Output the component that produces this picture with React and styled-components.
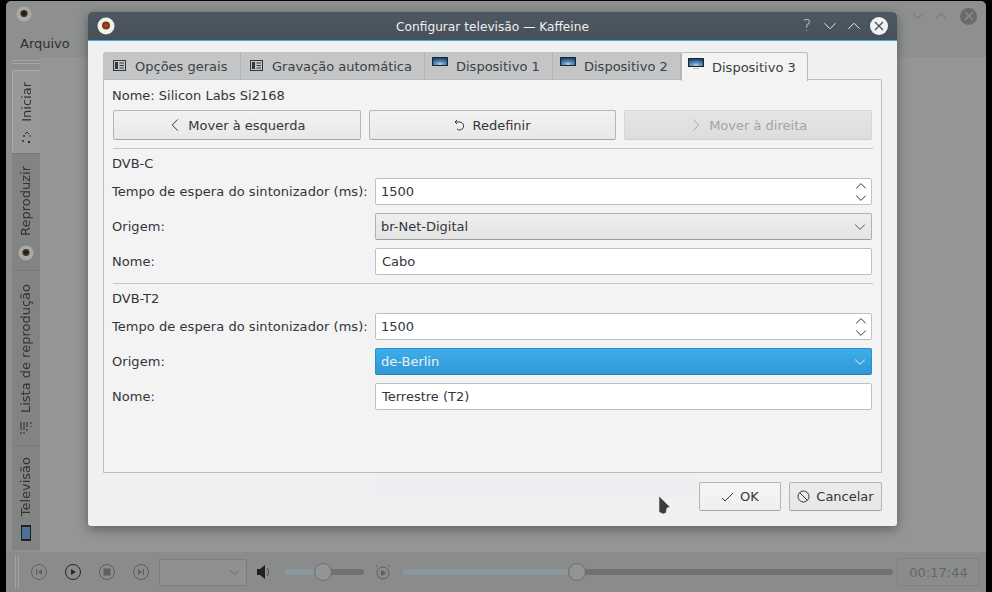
import React from "react";
import styled, { createGlobalStyle } from "styled-components";

const GlobalStyle = createGlobalStyle`
  html, body {
    margin: 0;
    padding: 0;
    width: 992px;
    height: 592px;
    overflow: hidden;
    background: #000;
    font-family: "DejaVu Sans", sans-serif;
    font-size: 13px;
    color: #31363b;
  }
`;

const Screen = styled.div`
  position: relative;
  width: 992px;
  height: 592px;
  background: #000;
  overflow: hidden;
`;

// Kaffeine main window, dimmed behind the dialog
const MainWindow = styled.div`
  margin-left: 6px;
  width: 980px;
  height: 591px;
  margin-top: 1px;
  border-radius: 5px 5px 0 0;
  background: #8e908f;
  display: flex;
  flex-direction: column;
`;

const TitleRow = styled.div`
  height: 30px;
  flex: none;
  padding: 5px 0 0 10px;
  box-sizing: border-box;
  display: flex;
  justify-content: space-between;
`;

const WindowControls = styled.div`
  display: flex;
  align-items: center;
  gap: 11px;
  height: 18px;
  margin: 1px 9px 0 0;
  color: #6e7070;
`;

const CloseDim = styled.div`
  width: 17px;
  height: 17px;
  margin-left: 2px;
  border-radius: 50%;
  background: #696b6b;
  display: flex;
  align-items: center;
  justify-content: center;
`;

const MenuRow = styled.div`
  height: 26px;
  flex: none;
  padding-left: 14px;
  box-sizing: border-box;
  line-height: 25px;
  color: #2e3031;
`;

const Middle = styled.div`
  flex: 1;
  display: flex;
  background: #949695;
`;

const Sidebar = styled.div`
  width: 34px;
  flex: none;
  padding: 3px 0 0 6px;
  box-sizing: border-box;
  background: #8e908f;
`;

const GripH = styled.div`
  height: 2px;
  width: 28px;
  border-top: 1px solid #a5a6a6;
  border-bottom: 1px solid #a5a6a6;
  margin-bottom: 6px;
`;

const SideTab = styled.div`
  height: ${(p) => p.$h}px;
  width: 28px;
  box-sizing: border-box;
  display: flex;
  flex-direction: column;
  align-items: center;
  justify-content: flex-end;
  gap: 9px;
  padding-bottom: 9px;
  background: ${(p) => (p.$active ? "#979998" : "#828483")};
  border-left: ${(p) => (p.$active ? "1px solid #a9aaaa" : "none")};
  border-top: 1px solid ${(p) => (p.$active ? "#a9aaaa" : "#787a79")};
  border-radius: ${(p) => (p.$active ? "3px 0 0 3px" : "0")};
  color: #303233;
`;

const SideLabel = styled.span`
  writing-mode: vertical-rl;
  transform: rotate(180deg);
  line-height: 28px;
  height: auto;
  width: 28px;
  text-align: left;
`;

const PlayerBar = styled.div`
  height: 40px;
  flex: none;
  background: #8a8c8b;
  display: flex;
  align-items: center;
  box-sizing: border-box;
  padding-left: 9px;
`;

const GripV = styled.div`
  width: 2px;
  height: 34px;
  border-left: 1px solid #a2a3a3;
  border-right: 1px solid #a2a3a3;
  margin-right: 12px;
`;

const RoundBtn = styled.div`
  width: 16px;
  height: 16px;
  flex: none;
  box-sizing: border-box;
  border-radius: 50%;
  border: 1px solid ${(p) => (p.$on ? "#26282a" : "#606262")};
  margin-right: 18px;
  display: flex;
  align-items: center;
  justify-content: center;
`;

const DimCombo = styled.div`
  width: 88px;
  height: 27px;
  flex: none;
  box-sizing: border-box;
  margin: 0 0 0 -8px;
  border: 1px solid #7c7e7d;
  border-radius: 2px;
  background: #8f9190;
  display: flex;
  align-items: center;
  justify-content: flex-end;
  padding-right: 6px;
`;

const Slider = styled.div`
  position: relative;
  width: ${(p) => p.$w}px;
  height: 6px;
  flex: none;
  border-radius: 3px;
  background: #707271;
  margin-left: ${(p) => p.$ml}px;
  overflow: visible;
`;

const SliderFill = styled.div`
  height: 6px;
  border-radius: 3px 0 0 3px;
  background: #8a989e;
`;

const SliderThumb = styled.div`
  position: absolute;
  top: -6px;
  width: 18px;
  height: 18px;
  box-sizing: border-box;
  border-radius: 50%;
  border: 1px solid #6c6e6d;
  background: #939594;
`;

const TimeBox = styled.div`
  width: 83px;
  height: 28px;
  flex: none;
  margin-left: 4px;
  box-sizing: border-box;
  border: 1px solid #7f817f;
  border-radius: 2px;
  color: #656766;
  display: flex;
  align-items: center;
  justify-content: center;
`;

// Dialog
const Dialog = styled.div`
  position: absolute;
  left: 88px;
  top: 12px;
  width: 809px;
  height: 514px;
  border-radius: 4px 4px 3px 3px;
  background: #f0f0f1;
  box-shadow: 0 3px 12px rgba(0, 0, 0, 0.38);
  display: flex;
  flex-direction: column;
  overflow: hidden;
`;

const DialogTitle = styled.div`
  position: relative;
  height: 29px;
  flex: none;
  box-sizing: border-box;
  background: linear-gradient(#4e5862, #475059);
  border-bottom: 1px solid #3daee9;
  color: #eff0f1;
  font-size: 12.2px;
  display: flex;
  align-items: center;
  justify-content: center;
  padding-top: 1px;
`;

const DialogLogo = styled.div`
  position: absolute;
  left: 9px;
  top: 5px;
`;

const TitleButtons = styled.div`
  position: absolute;
  right: 9px;
  top: 5px;
  display: flex;
  align-items: center;
  gap: 10px;
`;

const HelpMark = styled.span`
  color: #c6cacd;
  font-size: 16px;
  font-weight: 300;
  width: 16px;
  margin-right: -2px;
  text-align: center;
  line-height: 18px;
`;

const CloseBtn = styled.div`
  width: 18px;
  height: 18px;
  margin-left: -1px;
  border-radius: 50%;
  background: #f2f3f4;
  display: flex;
  align-items: center;
  justify-content: center;
`;

const DialogBody = styled.div`
  flex: 1;
  padding: 11px 15px 15px;
  display: flex;
  flex-direction: column;
`;

const TabBar = styled.div`
  display: flex;
  height: 28px;
  flex: none;
  position: relative;
  z-index: 1;
`;

const Tab = styled.div`
  width: ${(p) => p.$w}px;
  box-sizing: border-box;
  display: flex;
  align-items: center;
  gap: ${(p) => p.$gap}px;
  padding: ${(p) => (p.$active ? 0 : 1)}px 0 0 ${(p) => p.$pl}px;
  color: #3a3f44;
  background: ${(p) => (p.$active ? "#f3f3f3" : "#c3c5c6")};
  border-right: 1px solid #b0b2b3;
  border-radius: ${(p) => (p.$first ? "3px 0 0 0" : "0")};
  height: 28px;
  ${(p) =>
    p.$active
      ? "border: 1px solid #b8baba; border-bottom: none; border-radius: 3px 3px 0 0; margin-top: 0; height: 29px;"
      : "border-bottom: 1px solid #b8baba;"}
`;

const Panel = styled.div`
  width: 779px;
  height: 394px;
  margin-top: -1px;
  box-sizing: border-box;
  background: #f3f3f3;
  border: 1px solid #bcbdbd;
  border-radius: 0 2px 0 0;
  padding: 6px 9px 0 9px;
  display: flex;
  flex-direction: column;
`;

const DeviceName = styled.div`
  height: 20px;
  line-height: 19px;
  margin: 0 0 4px -1px;
`;

const MoveRow = styled.div`
  display: flex;
  gap: 8px;
  height: 30px;
`;

const PushButton = styled.div`
  flex: 1;
  box-sizing: border-box;
  display: flex;
  align-items: center;
  justify-content: center;
  gap: 6px;
  color: ${(p) => (p.$disabled ? "#a3a5a7" : "#31363b")};
  background: ${(p) =>
    p.$disabled
      ? "linear-gradient(#e5e5e6, #dcdddd)"
      : "linear-gradient(#f2f2f2, #e8e8e8)"};
  border: 1px solid ${(p) => (p.$disabled ? "#d6d7d7" : "#b5b6b6")};
  border-bottom-color: ${(p) => (p.$disabled ? "#cfd0d0" : "#a4a5a5")};
  border-radius: 2px;
`;

const Divider = styled.div`
  height: 1px;
  background: #c4c5c5;
  margin-top: ${(p) => p.$mt}px;
  margin-right: -1px;
`;

const GroupTitle = styled.div`
  height: 29px;
  line-height: 29px;
  margin-left: -1px;
`;

const FormRow = styled.div`
  display: grid;
  grid-template-columns: 262px 497px;
  align-items: center;
  height: 27px;
  margin-bottom: 8px;
`;

const FormLabel = styled.label`
  white-space: nowrap;
  margin-left: -1px;
  letter-spacing: 0.05px;
`;

const Field = styled.div`
  height: 27px;
  box-sizing: border-box;
  background: #fff;
  border: 1px solid #bfc0c0;
  border-radius: 2px;
  padding: 0 6px;
  display: flex;
  align-items: center;
  justify-content: space-between;
  color: #31363b;
`;

const SpinField = styled(Field)`
  padding: 0 5px;
`;

const Combo = styled.div`
  height: 27px;
  box-sizing: border-box;
  border-radius: 2px;
  padding: 0 5px;
  display: flex;
  align-items: center;
  justify-content: space-between;
  color: ${(p) => (p.$focus ? "#eff0f1" : "#31363b")};
  background: ${(p) =>
    p.$focus
      ? "linear-gradient(#3daee9, #3097d6)"
      : "linear-gradient(#eeeeee, #e4e4e4)"};
  border: 1px solid ${(p) => (p.$focus ? "#2f8cc6" : "#b0b1b1")};
  border-bottom-color: ${(p) => (p.$focus ? "#2a7fb4" : "#9d9e9e")};
`;

const SpinArrows = styled.div`
  display: flex;
  flex-direction: column;
  gap: 0;
  margin-right: -1px;
`;

const DialogActions = styled.div`
  flex: 1;
  display: flex;
  justify-content: flex-end;
  align-items: flex-start;
  gap: 8px;
  padding-top: 9px;
  width: 779px;
`;

const ActionButton = styled.div`
  width: ${(p) => p.$w}px;
  height: 29px;
  box-sizing: border-box;
  display: flex;
  align-items: center;
  justify-content: center;
  gap: 6px;
  background: ${(p) => p.$bg};
  border: 1px solid #b5b6b6;
  border-bottom-color: #a4a5a5;
  border-radius: 2px;
`;

const Cursor = styled.svg`
  position: absolute;
  left: 658px;
  top: 495px;
`;

const GhostBand = styled.div`
  position: absolute;
  left: 372px;
  top: 478px;
  width: 325px;
  height: 20px;
  background: rgba(61, 130, 233, 0.015);
  filter: blur(3px);
`;

const Chevron = ({ dir = "down", color = "#31363b", size = 10 }) => {
  const paths = {
    down: "M1 3l4 4 4-4",
    up: "M1 7l4-4 4 4",
    left: "M7 1L3 5l4 4",
    right: "M3 1l4 4-4 4",
  };
  return (
    <svg width={size} height={size} viewBox="0 0 10 10" fill="none" stroke={color} strokeWidth={10 / size}>
      <path d={paths[dir]} />
    </svg>
  );
};

const KaffeineLogo = ({ size = 18, dim }) => (
  <svg width={size} height={size} viewBox="0 0 18 18">
    <circle cx="9" cy="9" r="8.5" fill={dim ? "#a9a9a8" : "#f4f1ec"} />
    <circle cx="9" cy="8.5" r="4" fill={dim ? "#3c2c24" : "#7a3a1c"} />
    <circle cx="9" cy="8.5" r="2" fill={dim ? "#231a16" : "#a8431c"} />
  </svg>
);

const ListIcon = () => (
  <svg width="13" height="11" viewBox="0 0 13 11" fill="none" stroke="#31363b" style={{ flex: "none", marginTop: -1 }}>
    <rect x="0.5" y="0.5" width="12" height="10" />
    <rect x="2" y="2" width="3" height="7" fill="#31363b" stroke="none" />
    <path d="M6.5 3h4.5M6.5 5.5h4.5M6.5 8h4.5" />
  </svg>
);

const MonitorIcon = () => (
  <svg width="16" height="13" viewBox="0 0 16 13" style={{ flex: "none", marginTop: -6 }}>
    <defs>
      <radialGradient id="tvScreen" cx="0.5" cy="0.85" r="0.8">
        <stop offset="0" stopColor="#d8cfa8" />
        <stop offset="0.35" stopColor="#5f97cc" />
        <stop offset="1" stopColor="#1a477c" />
      </radialGradient>
    </defs>
    <rect x="0" y="0" width="16" height="9" rx="0.5" fill="#1f2326" />
    <rect x="1" y="1" width="14" height="7" fill="url(#tvScreen)" />
    <rect x="5" y="10" width="6" height="1" fill="#bbbdbe" />
  </svg>
);

const SmallCircleIcon = ({ kind, color = "#5e6060" }) => (
  <svg width="8" height="8" viewBox="0 0 8 8" fill={color}>
    {kind === "prev" && <path d="M1 1h1.2v6H1zM7 1v6L3 4z" />}
    {kind === "next" && <path d="M7 1H5.8v6H7zM1 1v6l4-3z" />}
    {kind === "play" && <path d="M2 1l5 3-5 3z" />}
    {kind === "stop" && <rect x="0.5" y="0.5" width="7" height="7" />}
  </svg>
);

function Row({ label, children }) {
  return (
    <FormRow>
      <FormLabel>{label}</FormLabel>
      {children}
    </FormRow>
  );
}

function Spin({ value }) {
  return (
    <SpinField>
      {value}
      <SpinArrows>
        <Chevron dir="up" size={12} />
        <Chevron dir="down" size={12} />
      </SpinArrows>
    </SpinField>
  );
}

function Source({ value, focus }) {
  return (
    <Combo $focus={focus}>
      {value}
      <Chevron color={focus ? "#eff0f1" : "#4a4f54"} size={12} />
    </Combo>
  );
}

export default function App() {
  return (
    <Screen>
      <GlobalStyle />
      <MainWindow>
        <TitleRow>
          <KaffeineLogo size={16} dim />
          <WindowControls>
            <Chevron dir="down" color="#6e7070" size={12} />
            <Chevron dir="up" color="#6e7070" size={12} />
            <CloseDim>
              <svg width="10" height="10" viewBox="0 0 10 10" stroke="#8e908f" strokeWidth="1.2">
                <path d="M1 1l8 8M9 1l-8 8" />
              </svg>
            </CloseDim>
          </WindowControls>
        </TitleRow>
        <MenuRow>Arquivo</MenuRow>
        <Middle>
          <Sidebar>
            <GripH />
            <SideTab $h={83} $active>
              <SideLabel>Iniciar</SideLabel>
              <svg width="14" height="14" viewBox="0 0 14 14" fill="#2b2d2e" style={{ marginBottom: -1 }}>
                <circle cx="3" cy="10" r="1" />
                <circle cx="4" cy="5" r="1" />
                <circle cx="9" cy="11" r="1.2" />
                <circle cx="10" cy="5" r="0.8" />
                <path d="M5 3l2-2 2 2" fill="none" stroke="#2b2d2e" />
              </svg>
            </SideTab>
            <SideTab $h={117}>
              <SideLabel>Reproduzir</SideLabel>
              <KaffeineLogo size={16} dim />
            </SideTab>
            <SideTab $h={175}>
              <SideLabel>Lista de reprodução</SideLabel>
              <svg width="14" height="12" viewBox="0 0 14 12" stroke="#2b2d2e" style={{ marginBottom: 2 }}>
                <path d="M2 0v8M5 0v8M8 0v5M12 0v2M2 10v2M5 10v2M8 7v2M12 4v1" />
              </svg>
            </SideTab>
            <SideTab $h={105}>
              <SideLabel>Televisão</SideLabel>
              <svg width="10" height="16" viewBox="0 0 10 16">
                <rect width="10" height="16" fill="#1f2326" />
                <rect x="1" y="2" width="8" height="12" fill="#4e6f98" />
              </svg>
            </SideTab>
          </Sidebar>
        </Middle>
        <PlayerBar>
          <GripV />
          <RoundBtn><SmallCircleIcon kind="prev" /></RoundBtn>
          <RoundBtn $on><SmallCircleIcon kind="play" color="#26282a" /></RoundBtn>
          <RoundBtn><SmallCircleIcon kind="stop" /></RoundBtn>
          <RoundBtn><SmallCircleIcon kind="next" /></RoundBtn>
          <DimCombo>
            <Chevron color="#666867" size={11} />
          </DimCombo>
          <svg width="16" height="16" viewBox="0 0 16 16" style={{ marginLeft: 10, flex: "none" }}>
            <path d="M0 5h3l5-4v14l-5-4H0z" fill="#1e2021" />
            <path d="M10 4c2 2 2 6 0 8" fill="none" stroke="#4c4e4e" />
          </svg>
          <Slider $w={80} $ml={11}>
            <SliderFill style={{ width: "38px" }} />
            <SliderThumb style={{ left: "30px" }} />
          </Slider>
          <svg width="16" height="16" viewBox="0 0 16 16" fill="none" stroke="#5e6060" style={{ marginLeft: 11, flex: "none" }}>
            <circle cx="8" cy="9" r="6" />
            <path d="M6.5 6.5l4 2.5-4 2.5z" fill="#5e6060" />
            <path d="M1 3l2-2M15 3l-2-2" />
          </svg>
          <Slider $w={491} $ml={11}>
            <SliderFill style={{ width: "175px" }} />
            <SliderThumb style={{ left: "166px" }} />
          </Slider>
          <TimeBox>00:17:44</TimeBox>
        </PlayerBar>
      </MainWindow>

      <Dialog>
        <DialogTitle>
          <DialogLogo>
            <KaffeineLogo size={18} />
          </DialogLogo>
          Configurar televisão — Kaffeine
          <TitleButtons>
            <HelpMark>?</HelpMark>
            <Chevron dir="down" color="#e3e5e7" size={14} />
            <Chevron dir="up" color="#e3e5e7" size={14} />
            <CloseBtn>
              <svg width="12" height="12" viewBox="0 0 12 12" stroke="#4a535c" strokeWidth="1.4">
                <path d="M2 2l8 8M10 2l-8 8" />
              </svg>
            </CloseBtn>
          </TitleButtons>
        </DialogTitle>
        <DialogBody>
          <TabBar>
            <Tab $w={138} $first $pl={10} $gap={9}><ListIcon />Opções gerais</Tab>
            <Tab $w={184} $pl={9} $gap={9}><ListIcon />Gravação automática</Tab>
            <Tab $w={128} $pl={7} $gap={8}><MonitorIcon />Dispositivo 1</Tab>
            <Tab $w={128} $pl={7} $gap={8}><MonitorIcon />Dispositivo 2</Tab>
            <Tab $w={127} $active $pl={6} $gap={8}><MonitorIcon />Dispositivo 3</Tab>
          </TabBar>
          <Panel>
            <DeviceName>Nome: Silicon Labs Si2168</DeviceName>
            <MoveRow>
              <PushButton>
                <Chevron dir="left" size={14} />
                Mover à esquerda
              </PushButton>
              <PushButton>
                <svg width="12" height="12" viewBox="0 0 12 12" fill="none" stroke="#31363b">
                  <path d="M3 1L1 3l2 2M1 3h5a4 4 0 1 1-3 7" />
                </svg>
                Redefinir
              </PushButton>
              <PushButton $disabled>
                <Chevron dir="right" color="#a3a5a7" size={14} />
                Mover à direita
              </PushButton>
            </MoveRow>
            <Divider $mt={8} />
            <GroupTitle>DVB-C</GroupTitle>
            <Row label="Tempo de espera do sintonizador (ms):"><Spin value="1500" /></Row>
            <Row label="Origem:"><Source value="br-Net-Digital" /></Row>
            <Row label="Nome:"><Field>Cabo</Field></Row>
            <Divider $mt={0} />
            <GroupTitle>DVB-T2</GroupTitle>
            <Row label="Tempo de espera do sintonizador (ms):"><Spin value="1500" /></Row>
            <Row label="Origem:"><Source value="de-Berlin" focus /></Row>
            <Row label="Nome:"><Field>Terrestre (T2)</Field></Row>
          </Panel>
          <DialogActions>
            <ActionButton $w={82} $bg="linear-gradient(#f6f6f6, #eeeeee)">
              <svg width="13" height="12" viewBox="0 0 13 12" fill="none" stroke="#31363b">
                <path d="M1 7l3 3 8-8" />
              </svg>
              OK
            </ActionButton>
            <ActionButton $w={93} $bg="linear-gradient(#ececec, #e6e6e6)">
              <svg width="13" height="13" viewBox="0 0 13 13" fill="none" stroke="#31363b">
                <circle cx="6.5" cy="6.5" r="5.5" />
                <path d="M2.7 2.7l7.6 7.6" />
              </svg>
              Cancelar
            </ActionButton>
          </DialogActions>
        </DialogBody>
      </Dialog>
      <GhostBand />
      <Cursor width="13" height="21" viewBox="0 0 13 21">
        <path d="M1 1l11 11-3 1-1 5-3 1-4-2z" fill="#3c3c3e" stroke="#e8e8e8" strokeWidth="0.6" />
      </Cursor>
    </Screen>
  );
}
